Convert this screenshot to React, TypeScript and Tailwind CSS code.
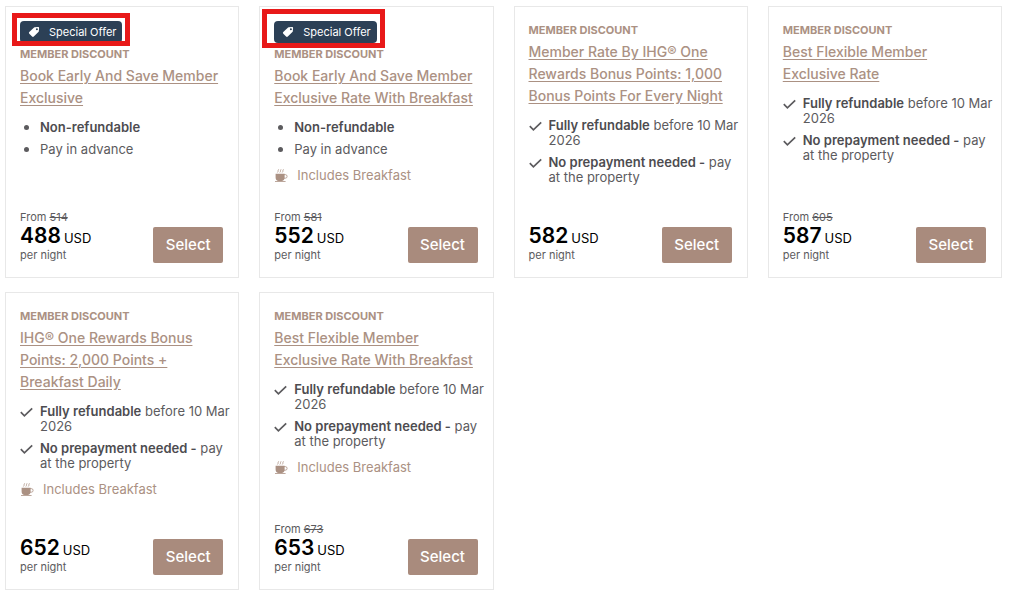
interface Perk {
  strong?: string;
  text?: string;
}

interface Rate {
  id: number;
  title: string;
  list: 'bullet' | 'check';
  perks: Perk[];
  breakfast?: boolean;
  from?: number;
  price: number;
  // outline drawn around the special offer badge
  highlight?: string;
}

const advance: Perk[] = [{ strong: 'Non-refundable' }, { text: 'Pay in advance' }];

const flexible: Perk[] = [
  { strong: 'Fully refundable', text: ' before 10 Mar 2026' },
  { strong: 'No prepayment needed -', text: ' pay at the property' },
];

const rates: Rate[] = [
  {
    id: 1,
    title: 'Book Early And Save Member Exclusive',
    list: 'bullet',
    perks: advance,
    from: 514,
    price: 488,
    highlight: '-inset-x-2 -top-2 -bottom-[3px]',
  },
  {
    id: 2,
    title: 'Book Early And Save Member Exclusive Rate With Breakfast',
    list: 'bullet',
    perks: advance,
    breakfast: true,
    from: 581,
    price: 552,
    highlight: '-left-3 -right-2 -top-3 -bottom-[5px]',
  },
  {
    id: 3,
    title: 'Member Rate By IHG® One Rewards Bonus Points: 1,000 Bonus Points For Every Night',
    list: 'check',
    perks: flexible,
    price: 582,
  },
  {
    id: 4,
    title: 'Best Flexible Member Exclusive Rate',
    list: 'check',
    perks: flexible,
    from: 605,
    price: 587,
  },
  {
    id: 5,
    title: 'IHG® One Rewards Bonus Points: 2,000 Points + Breakfast Daily',
    list: 'check',
    perks: flexible,
    breakfast: true,
    price: 652,
  },
  {
    id: 6,
    title: 'Best Flexible Member Exclusive Rate With Breakfast',
    list: 'check',
    perks: flexible,
    breakfast: true,
    from: 673,
    price: 653,
  },
];

const TagIcon = () => (
  <svg className="shrink-0" width="12" height="12" viewBox="0 0 12 12" aria-hidden="true">
    <path
      fill="currentColor"
      fillRule="evenodd"
      d="M6.6 1.3 10 1a1 1 0 0 1 1.1 1.1l-.3 3.2a1.3 1.3 0 0 1-.4.8l-4.6 4.5a1.2 1.2 0 0 1-1.7 0L1.3 7.8a1.2 1.2 0 0 1 0-1.7l4.5-4.4a1.3 1.3 0 0 1 .8-.4ZM8.9 2.2a1 1 0 1 0 0 2 1 1 0 0 0 0-2Z"
    />
  </svg>
);

const CheckIcon = () => (
  <svg className="mt-[3px] shrink-0" width="13" height="11" viewBox="0 0 13 11" aria-hidden="true">
    <path d="M.8 5.2 4.4 8.8 12.2 1.4" fill="none" stroke="currentColor" strokeWidth="1.7" />
  </svg>
);

const CupIcon = () => (
  <svg className="shrink-0" width="14" height="14" viewBox="0 0 14 14" aria-hidden="true">
    <g fill="none" stroke="currentColor" strokeWidth="0.8" strokeLinecap="round">
      <path d="M4.4.6c-.9.8.4 1.3-.7 2.6M6.8.6c-.9.8.4 1.3-.7 2.6M9.2.6c-.9.8.4 1.3-.7 2.6" />
      <path d="M10.3 5.6h1a1.4 1.4 0 0 1 0 3.6h-1.2" />
      <path d="M1.4 12.5h9.8" />
    </g>
    <path d="M1.6 4.8h9v3.6c0 2-1.2 3.6-3 3.6h-3c-1.8 0-3-1.6-3-3.6Z" fill="currentColor" />
  </svg>
);

const RateCard = ({ rate }: { rate: Rate }) => (
  <article className="flex flex-col border border-[#e8e8e8] bg-white py-3.5 pr-[15px] pl-3.5">
    {rate.highlight && (
      <div className="relative mb-0.5 flex h-[22px] items-center gap-[9px] self-start rounded-sm bg-[#2c4056] pr-1.5 pl-2 text-[11px] text-white">
        <TagIcon />
        Special Offer
        <span className={`absolute border-5 border-[#e81919] ${rate.highlight}`} />
      </div>
    )}

    <p className="text-[11px] leading-[18px] font-bold text-[#ab9183]">MEMBER DISCOUNT</p>
    <h3 className="mt-0.5 text-[14px] leading-[22px] font-medium text-[#ab9183]">
      <a href="#" className="underline underline-offset-2">
        {rate.title}
      </a>
    </h3>

    <ul className="-mr-2 mt-[11px] flex flex-col gap-[7px] text-[13px] leading-[15px] text-[#5c5b5e]">
      {rate.perks.map((perk, i) => (
        <li key={i} className="flex gap-[7px]">
          {rate.list === 'check' ? (
            <CheckIcon />
          ) : (
            <span className="flex w-[13px] shrink-0 items-center justify-center">
              <span className="size-[5px] rounded-full bg-current" />
            </span>
          )}
          <span>
            {perk.strong && <strong className="font-semibold text-[#4d4c50]">{perk.strong}</strong>}
            {perk.text}
          </span>
        </li>
      ))}
    </ul>

    {rate.breakfast && (
      <p className="mt-[11px] flex items-center gap-[9px] text-[13px] leading-[15px] text-[#ab9183]">
        <CupIcon />
        Includes Breakfast
      </p>
    )}

    <div className="mt-auto flex items-end justify-between pt-[23px]">
      <div className="text-[11px] leading-[15px] text-[#5c5b5e]">
        <p className="h-4 leading-[18px]">
          {rate.from && (
            <>
              From <s>{rate.from}</s>
            </>
          )}
        </p>
        <p className="flex h-6 items-baseline gap-[3px] text-[13px] leading-6 text-black">
          <span className="text-[21px] font-semibold">{rate.price}</span> USD
        </p>
        <p>per night</p>
      </div>
      <button type="button" className="h-9 w-[70px] rounded-xs bg-[#a98b7d] text-[15px] font-medium text-white">
        Select
      </button>
    </div>
  </article>
);

export default function App() {
  return (
    <main className="grid grid-cols-4 gap-x-5 gap-y-3.5 bg-white pt-1.5 pr-[22px] pb-2 pl-[5px] font-['Inter',sans-serif]">
      {rates.map((rate) => (
        <RateCard key={rate.id} rate={rate} />
      ))}
    </main>
  );
}
